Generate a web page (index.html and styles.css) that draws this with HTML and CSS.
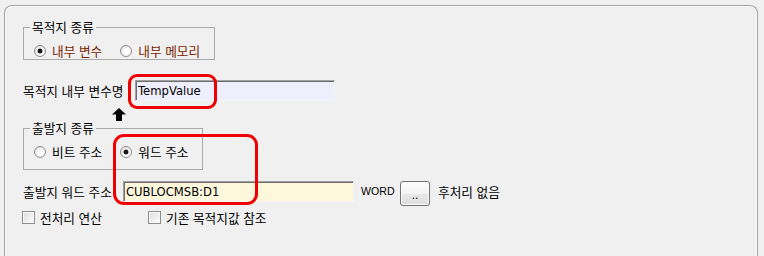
FILE: index.html
```html
<!DOCTYPE html>
<html lang="ko">
<head>
<meta charset="utf-8">
<link rel="stylesheet" href="styles.css">
</head>
<body>
<div class="screen">
  <div class="panel">
    <fieldset class="group g1">
      <legend>목적지 종류</legend>
      <div class="radios">
        <span class="radio-item accent"><span class="radio checked"></span>내부 변수</span>
        <span class="radio-item accent"><span class="radio"></span>내부 메모리</span>
      </div>
    </fieldset>

    <div class="row row-dest">
      <span class="label w-dest">목적지 내부 변수명</span>
      <input class="field field-dest" type="text" value="TempValue">
    </div>

    <fieldset class="group g2">
      <legend>출발지 종류</legend>
      <div class="radios">
        <span class="radio-item"><span class="radio"></span>비트 주소</span>
        <span class="radio-item"><span class="radio checked"></span>워드 주소</span>
      </div>
    </fieldset>

    <div class="row row-src">
      <span class="label w-src">출발지 워드 주소</span>
      <input class="field field-src" type="text" value="CUBLOCMSB:D1">
      <span class="word">WORD</span>
      <button class="browse" type="button">..</button>
      <span class="label post">후처리 없음</span>
    </div>

    <div class="checks">
      <span class="check-item first"><span class="checkbox"></span>전처리 연산</span>
      <span class="check-item"><span class="checkbox"></span>기존 목적지값 참조</span>
    </div>
  </div>

  <svg class="arrow" width="14" height="13" viewBox="0 0 14 13">
    <path d="M7 0 L14 6.5 L10 6.5 L10 13 L4 13 L4 6.5 L0 6.5 Z" fill="#000"/>
  </svg>
  <div class="mark mark1"></div>
  <div class="mark mark2"></div>
</div>
</body>
</html>
```

FILE: styles.css
```css
html, body {
  margin: 0;
  padding: 0;
  background: #f0f0f0;
}

.screen {
  position: relative;
  width: 764px;
  height: 256px;
  overflow: hidden;
  box-sizing: border-box;
  padding: 5px 0 0 4px;
  font-family: "Noto Sans CJK KR", "DejaVu Sans", sans-serif;
  font-size: 12.7px;
  color: #000;
}

.panel {
  box-sizing: border-box;
  width: 754px;
  height: 270px;
  border: 1px solid #a3a3a3;
  border-bottom: none;
  border-radius: 8px 8px 0 0;
  box-shadow: inset 1px 1px 0 #fbfbfb, inset -1px 0 0 #fbfbfb;
  padding-left: 18px;
  display: flex;
  flex-direction: column;
  align-items: flex-start;
}

.group {
  box-sizing: border-box;
  margin: 0;
  border: 1px solid #aaaaaa;
  padding: 0;
  min-width: 0;
}

.group legend {
  margin-left: 6px;
  padding: 0 2px;
  line-height: 14px;
  height: 14px;
}

.g1 {
  margin-top: 14px;
  width: 192px;
  height: 40px;
}

.g2 {
  margin-top: 20px;
  width: 180px;
  height: 49px;
}

.radios {
  display: flex;
  align-items: center;
  gap: 18px;
  height: 16px;
  margin-top: 9px;
  padding-left: 10px;
  line-height: 16px;
}

.radio-item {
  display: flex;
  align-items: center;
  gap: 6px;
  white-space: nowrap;
}

.accent {
  color: #7c2400;
}

.radio {
  box-sizing: border-box;
  width: 12px;
  height: 12px;
  border-radius: 50%;
  border: 1px solid #8c8c8c;
  background: radial-gradient(circle at 60% 60%, #ffffff 30%, #e2e2e2 75%, #d0d0d0 100%);
  display: flex;
  align-items: center;
  justify-content: center;
}

.radio.checked::after {
  content: "";
  width: 4px;
  height: 4px;
  border-radius: 50%;
  background: #111;
  box-shadow: 0 0 0 0.5px #333;
}

.row {
  display: flex;
  align-items: flex-start;
  height: 21px;
}

.row-dest {
  margin-top: 20px;
}

.row-src {
  margin-top: 11px;
  height: 25px;
}

.label {
  line-height: 21px;
  height: 21px;
  white-space: nowrap;
}

.w-dest {
  width: 112px;
}

.w-src {
  width: 100px;
}

.field {
  box-sizing: border-box;
  margin: 0;
  height: 21px;
  border-style: solid;
  border-width: 1px;
  border-color: #a0a0a0 #f4f4f4 #f4f4f4 #a0a0a0;
  box-shadow: inset 1px 1px 0 #6d6d6d;
  padding: 1px 0 0 2px;
  font-family: "DejaVu Sans", "Liberation Sans", sans-serif;
  font-size: 11.6px;
  color: #000;
  outline: none;
}

.field-dest {
  width: 200px;
  background: #eeeefc;
}

.field-src {
  width: 231px;
  background: #fdf8dc;
}

.word {
  margin-left: 7px;
  line-height: 21px;
  font-family: "Liberation Sans", sans-serif;
  font-size: 10.6px;
  width: 33px;
}

.browse {
  box-sizing: border-box;
  margin: 0 0 0 6px;
  width: 30px;
  height: 25px;
  padding: 3px 0 0 0;
  border: 1px solid #707070;
  border-radius: 3px;
  background: linear-gradient(#fcfcfc, #f3f3f3 50%, #e8e8e8 51%, #dedede);
  box-shadow: inset 0 0 0 1px #fdfdfd;
  font-family: "Liberation Sans", sans-serif;
  font-size: 12px;
  line-height: 16px;
  color: #000;
}

.post {
  margin-left: 8px;
}

.checks {
  display: flex;
  align-items: center;
  margin-top: 5px;
  margin-left: -1px;
  height: 13px;
  line-height: 13px;
}

.check-item {
  display: flex;
  align-items: center;
  gap: 5px;
  white-space: nowrap;
}

.check-item.first {
  width: 126px;
}

.checkbox {
  box-sizing: border-box;
  width: 13px;
  height: 13px;
  border: 1px solid #8e8f8f;
  background: linear-gradient(135deg, #dcdcdc, #ffffff);
  box-shadow: inset 0 0 0 1px #f6f6f6;
}

.arrow {
  position: absolute;
  left: 112px;
  top: 108px;
}

.mark {
  position: absolute;
  box-sizing: border-box;
  border: 3px solid #f00000;
}

.mark1 {
  left: 128px;
  top: 74px;
  width: 89px;
  height: 35px;
  border-radius: 9px;
}

.mark2 {
  left: 113px;
  top: 134px;
  width: 145px;
  height: 71px;
  border-radius: 11px;
}
```
